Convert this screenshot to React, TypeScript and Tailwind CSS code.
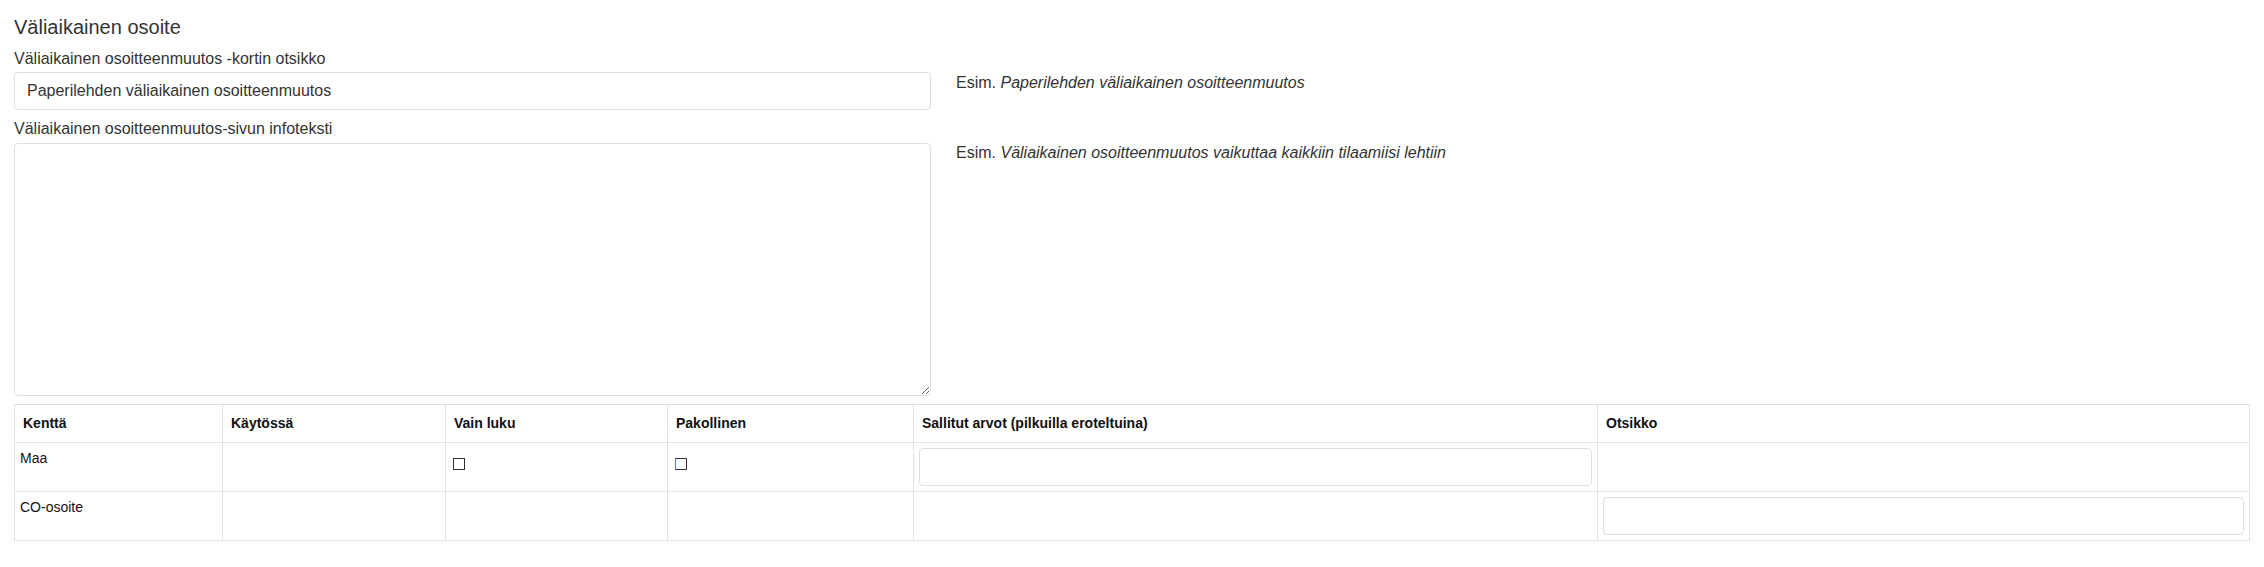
import { useState } from 'react';

const font = { fontFamily: '"Liberation Sans", Arial, sans-serif' };

interface FieldRow {
  name: string;
  readOnlyBox: boolean;
  requiredBox: boolean;
  allowedInput: boolean;
  titleInput: boolean;
}

const rows: FieldRow[] = [
  { name: 'Maa', readOnlyBox: true, requiredBox: true, allowedInput: true, titleInput: false },
  { name: 'CO-osoite', readOnlyBox: false, requiredBox: false, allowedInput: false, titleInput: true },
];

function Box({ focused }: { focused?: boolean }) {
  return (
    <div
      className={
        'mt-[10px] ml-[2px] w-[12px] h-[12px] border border-[#333] bg-white ' +
        (focused ? 'border-l-[#3b82c4]' : '')
      }
    />
  );
}

function CellInput() {
  return (
    <input
      type="text"
      className="block w-full h-[38px] rounded-[4px] border border-[#dedede] bg-white px-3 text-[16px] text-[#333] outline-none"
    />
  );
}

export default function App() {
  const [title, setTitle] = useState('Paperilehden väliaikainen osoitteenmuutos');
  const [info, setInfo] = useState('');

  return (
    <div className="w-[2264px] min-h-[567px] bg-white px-[14px] pt-4 text-[#333]" style={font}>
      <h3 className="text-[20px] leading-[22px] font-normal">Väliaikainen osoite</h3>

      <label className="block mt-[11px] text-[16px] leading-5">
        Väliaikainen osoitteenmuutos -kortin otsikko
      </label>
      <div className="flex items-start gap-[25px] mt-[3px]">
        <input
          type="text"
          value={title}
          onChange={(e) => setTitle(e.target.value)}
          className="w-[917px] h-[38px] rounded-[4px] border border-[#dedede] bg-white px-3 text-[16px] text-[#333] outline-none"
        />
        <p className="mt-px text-[16px] leading-5">
          Esim. <i>Paperilehden väliaikainen osoitteenmuutos</i>
        </p>
      </div>

      <label className="block mt-[9px] text-[16px] leading-5">
        Väliaikainen osoitteenmuutos-sivun infoteksti
      </label>
      <div className="flex items-start gap-[25px] mt-[4px]">
        <textarea
          value={info}
          onChange={(e) => setInfo(e.target.value)}
          className="w-[917px] h-[253px] rounded-[4px] border border-[#dedede] bg-white px-3 py-2 text-[16px] text-[#333] outline-none"
        />
        <p className="text-[16px] leading-5">
          Esim. <i>Väliaikainen osoitteenmuutos vaikuttaa kaikkiin tilaamiisi lehtiin</i>
        </p>
      </div>

      <table className="mt-[8px] w-[2236px] table-fixed border-collapse border border-[#dddddd] text-[14px] text-[#111]">
        <colgroup>
          <col className="w-[208px]" />
          <col className="w-[223px]" />
          <col className="w-[222px]" />
          <col className="w-[246px]" />
          <col className="w-[684px]" />
          <col />
        </colgroup>
        <thead>
          <tr className="h-[38px] border-b border-[#dce8f4]">
            {['Kenttä', 'Käytössä', 'Vain luku', 'Pakollinen', 'Sallitut arvot (pilkuilla eroteltuina)', 'Otsikko'].map((h) => (
              <th key={h} className="border-x border-[#e2e2e2] px-2 text-left align-middle font-bold">
                {h}
              </th>
            ))}
          </tr>
        </thead>
        <tbody>
          {rows.map((r, i) => (
            <tr key={r.name} className={(i === 0 ? 'h-[49px] ' : 'h-[48px] ') + 'border-b border-[#dce8f4]'}>
              <td className="border-x border-[#e2e2e2] px-[5px] py-[5px] align-top leading-5">{r.name}</td>
              <td className="border-x border-[#e2e2e2] px-[5px] py-[5px] align-top" />
              <td className="border-x border-[#e2e2e2] px-[5px] py-[5px] align-top">
                {r.readOnlyBox && <Box />}
              </td>
              <td className="border-x border-[#e2e2e2] px-[5px] py-[5px] align-top">
                {r.requiredBox && <Box focused />}
              </td>
              <td className="border-x border-[#e2e2e2] px-[5px] py-[5px] align-top">
                {r.allowedInput && <CellInput />}
              </td>
              <td className="border-x border-[#e2e2e2] px-[5px] py-[5px] align-top">
                {r.titleInput && <CellInput />}
              </td>
            </tr>
          ))}
        </tbody>
      </table>
    </div>
  );
}
